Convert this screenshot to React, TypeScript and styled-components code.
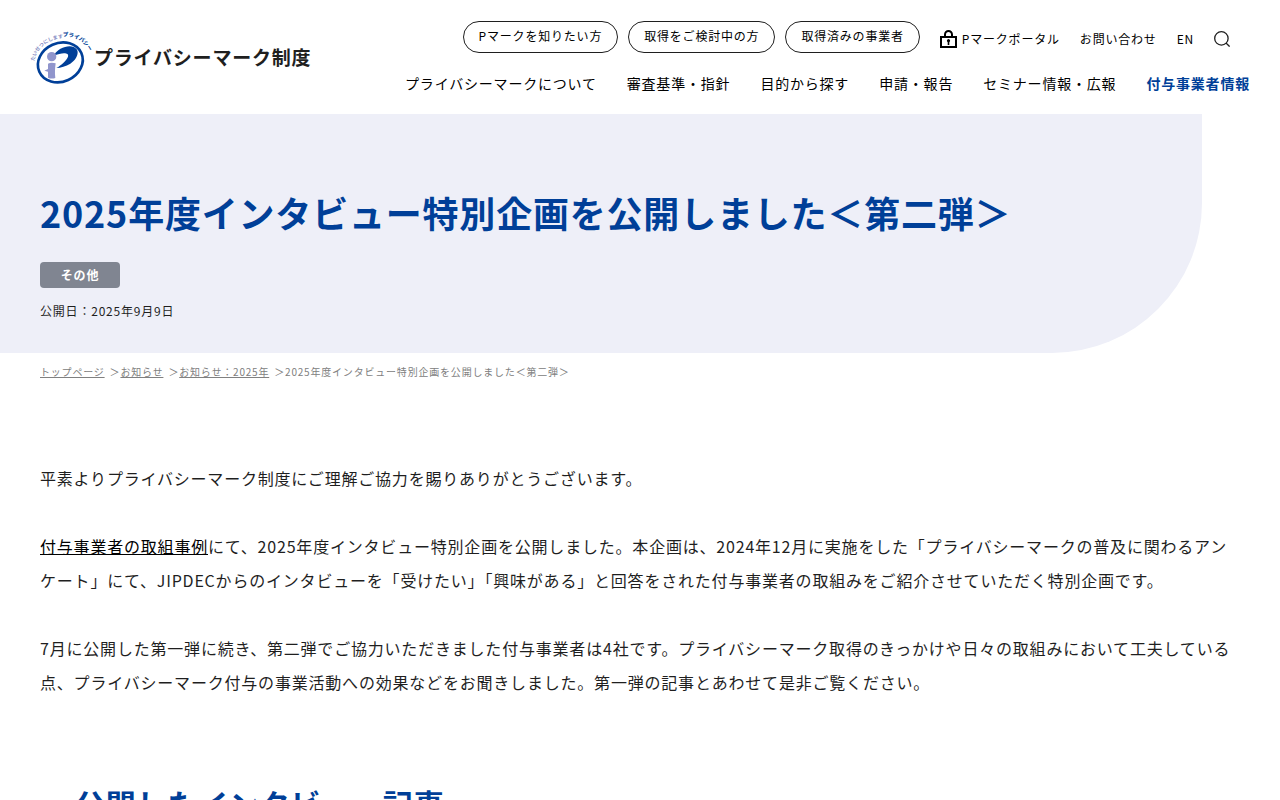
import React from "react";
import styled, { createGlobalStyle } from "styled-components";

const BLUE = "#003f98";
const INK = "#1f1f1f";

const GlobalStyle = createGlobalStyle`
  *, *::before, *::after { box-sizing: border-box; }
  body {
    margin: 0;
    background: #fff;
    color: ${INK};
    font-family: "Noto Sans CJK JP", "Noto Sans", sans-serif;
    font-size: 16px;
    letter-spacing: 0.05em;
  }
  a { color: inherit; }
`;

const Header = styled.header`
  display: flex;
  justify-content: space-between;
  align-items: flex-start;
  padding: 21px 30px 20px;
`;

const Brand = styled.a`
  display: flex;
  align-items: center;
  gap: 4px;
  padding-top: 9px;
  color: ${INK};
  font-size: 19px;
  font-weight: 700;
  line-height: 28px;
  text-decoration: none;
  white-space: nowrap;
`;

const LogoSvg = styled.svg`
  width: 60px;
  height: 54px;
  overflow: visible;
  letter-spacing: 0;
`;

const HeaderMenus = styled.div`
  display: flex;
  flex-direction: column;
  align-items: flex-end;
  gap: 20px;
  white-space: nowrap;
`;

const UtilityRow = styled.div`
  display: flex;
  align-items: center;
  gap: 20px;
  padding-right: 20px;
  font-size: 12px;
  line-height: 18px;
`;

const Pills = styled.div`
  display: flex;
  gap: 10px;
`;

const Pill = styled.a`
  height: 32px;
  padding: 5px 15px 7px;
  border: 1px solid ${INK};
  border-radius: 16px;
  color: #000;
  text-decoration: none;
`;

const UtilityLinks = styled.div`
  display: flex;
  align-items: center;
  gap: 20px;
  padding-top: 4px;
`;

const UtilityLink = styled.a`
  display: flex;
  align-items: center;
  gap: 5px;
  color: #000;
  text-decoration: none;
`;

const SearchButton = styled.button`
  display: flex;
  padding: 0;
  border: 0;
  background: none;
  cursor: pointer;
`;

const MainNav = styled.nav`
  display: flex;
  gap: 30px;
`;

const NavLink = styled.a<{ $current?: boolean }>`
  color: ${(p) => (p.$current ? BLUE : "#000")};
  font-size: 14px;
  font-weight: ${(p) => (p.$current ? 700 : 400)};
  line-height: 21px;
  text-decoration: none;
`;

const Hero = styled.section`
  margin-right: 78px;
  padding: 71px 40px 33px;
  border-radius: 0 0 150px 0;
  background: #eeeff8;
`;

const Title = styled.h1`
  margin: 0 0 23px;
  color: ${BLUE};
  font-size: 36px;
  font-weight: 700;
  line-height: 54px;
`;

const Tag = styled.span`
  display: block;
  width: 80px;
  border-radius: 4px;
  background: #808591;
  color: #fff;
  font-size: 12px;
  font-weight: 700;
  line-height: 26px;
  text-align: center;
`;

const PublishedOn = styled.p`
  margin: 14px 0 0;
  font-size: 12px;
  line-height: 18px;
`;

const Breadcrumb = styled.ol`
  display: flex;
  flex-wrap: wrap;
  margin: 0;
  padding: 11px 40px 0;
  color: #808080;
  font-size: 10px;
  line-height: 15px;
  list-style: none;
`;

const Crumb = styled.li`
  & + &::before {
    content: "＞";
    margin-left: 5px;
  }
`;

const Article = styled.main`
  padding: 82px 40px 60px;
`;

const Paragraph = styled.p`
  margin: 0 0 34px;
  line-height: 34px;
`;

const TextLink = styled.a`
  color: #000;
`;

const SectionTitle = styled.h2`
  margin: 82px 0 0;
  padding-left: 35px;
  color: ${BLUE};
  font-size: 30px;
  font-weight: 700;
  line-height: 45px;
`;

const PrivacyMarkLogo = () => (
  <LogoSvg viewBox="0 0 180 162" aria-hidden="true">
    <defs>
      <path id="arcLeft" d="M13 94 C18 60 46 29 101 24" />
      <path id="arcRight" d="M99 20 C133 16 162 34 178 64" />
    </defs>
    <ellipse cx="91" cy="97" rx="69" ry="58" transform="rotate(-24 91 97)" fill="none" stroke={BLUE} strokeWidth="8" />
    <path
      d="M70 78 C82 56 112 44 131 51 C153 60 142 88 121 101 C108 109 92 113 79 114 C95 105 109 92 114 80 C118 68 98 66 70 78Z"
      fill={BLUE}
    />
    <circle cx="65" cy="80" r="14" fill="#9095cc" />
    <path d="M54 101 C61 97 70 98 77 100 C75 115 74 128 76 144 C68 147 60 146 54 143 L54 125 L43 122 L54 117Z" fill="#9095cc" />
    <text fontSize="15" fontWeight="700" fill="#858bc4">
      <textPath href="#arcLeft">たいせつにします</textPath>
    </text>
    <text fontSize="16" fontWeight="900" fill={BLUE}>
      <textPath href="#arcRight">プライバシー</textPath>
    </text>
  </LogoSvg>
);

const LockIcon = () => (
  <svg width="17" height="18" viewBox="0 0 17 18" aria-hidden="true">
    <path d="M5 7V4.5a3.5 3.5 0 0 1 7 0V7" fill="none" stroke="#000" strokeWidth="2" />
    <rect x="1" y="7" width="15" height="10" fill="none" stroke="#000" strokeWidth="2" />
    <path d="M8.5 9a1.8 1.8 0 0 1 .8 3.3V15H7.7v-2.7A1.8 1.8 0 0 1 8.5 9Z" fill="#000" />
  </svg>
);

const SearchIcon = () => (
  <svg width="16" height="16" viewBox="0 0 16 16" fill="none" stroke={INK} strokeWidth="1.3" aria-hidden="true">
    <circle cx="7.4" cy="7.4" r="6.7" />
    <path d="M12 12L15.6 15.6" />
  </svg>
);

const audiences = ["Pマークを知りたい方", "取得をご検討中の方", "取得済みの事業者"];

const sections = [
  "プライバシーマークについて",
  "審査基準・指針",
  "目的から探す",
  "申請・報告",
  "セミナー情報・広報",
  "付与事業者情報",
];

const trail = ["トップページ", "お知らせ", "お知らせ：2025年"];

const title = "2025年度インタビュー特別企画を公開しました＜第二弾＞";

export default function App() {
  return (
    <>
      <GlobalStyle />
      <Header>
        <Brand href="#">
          <PrivacyMarkLogo />
          プライバシーマーク制度
        </Brand>
        <HeaderMenus>
          <UtilityRow>
            <Pills>
              {audiences.map((label) => (
                <Pill key={label} href="#">{label}</Pill>
              ))}
            </Pills>
            <UtilityLinks>
              <UtilityLink href="#">
                <LockIcon />
                Pマークポータル
              </UtilityLink>
              <UtilityLink href="#">お問い合わせ</UtilityLink>
              <UtilityLink href="#">EN</UtilityLink>
              <SearchButton type="button" aria-label="検索">
                <SearchIcon />
              </SearchButton>
            </UtilityLinks>
          </UtilityRow>
          <MainNav>
            {sections.map((label) => (
              <NavLink key={label} href="#" $current={label === "付与事業者情報"}>
                {label}
              </NavLink>
            ))}
          </MainNav>
        </HeaderMenus>
      </Header>
      <Hero>
        <Title>{title}</Title>
        <Tag>その他</Tag>
        <PublishedOn>公開日：2025年9月9日</PublishedOn>
      </Hero>
      <nav>
        <Breadcrumb>
          {trail.map((label) => (
            <Crumb key={label}>
              <a href="#">{label}</a>
            </Crumb>
          ))}
          <Crumb>{title}</Crumb>
        </Breadcrumb>
      </nav>
      <Article>
        <Paragraph>平素よりプライバシーマーク制度にご理解ご協力を賜りありがとうございます。</Paragraph>
        <Paragraph>
          <TextLink href="#">付与事業者の取組事例</TextLink>
          にて、2025年度インタビュー特別企画を公開しました。本企画は、2024年12月に実施をした「プライバシーマークの普及に関わるアンケート」にて、JIPDECからのインタビューを「受けたい」「興味がある」と回答をされた付与事業者の取組みをご紹介させていただく特別企画です。
        </Paragraph>
        <Paragraph>
          7月に公開した第一弾に続き、第二弾でご協力いただきました付与事業者は4社です。プライバシーマーク取得のきっかけや日々の取組みにおいて工夫している点、プライバシーマーク付与の事業活動への効果などをお聞きしました。第一弾の記事とあわせて是非ご覧ください。
        </Paragraph>
        <SectionTitle>公開したインタビュー記事</SectionTitle>
      </Article>
    </>
  );
}
